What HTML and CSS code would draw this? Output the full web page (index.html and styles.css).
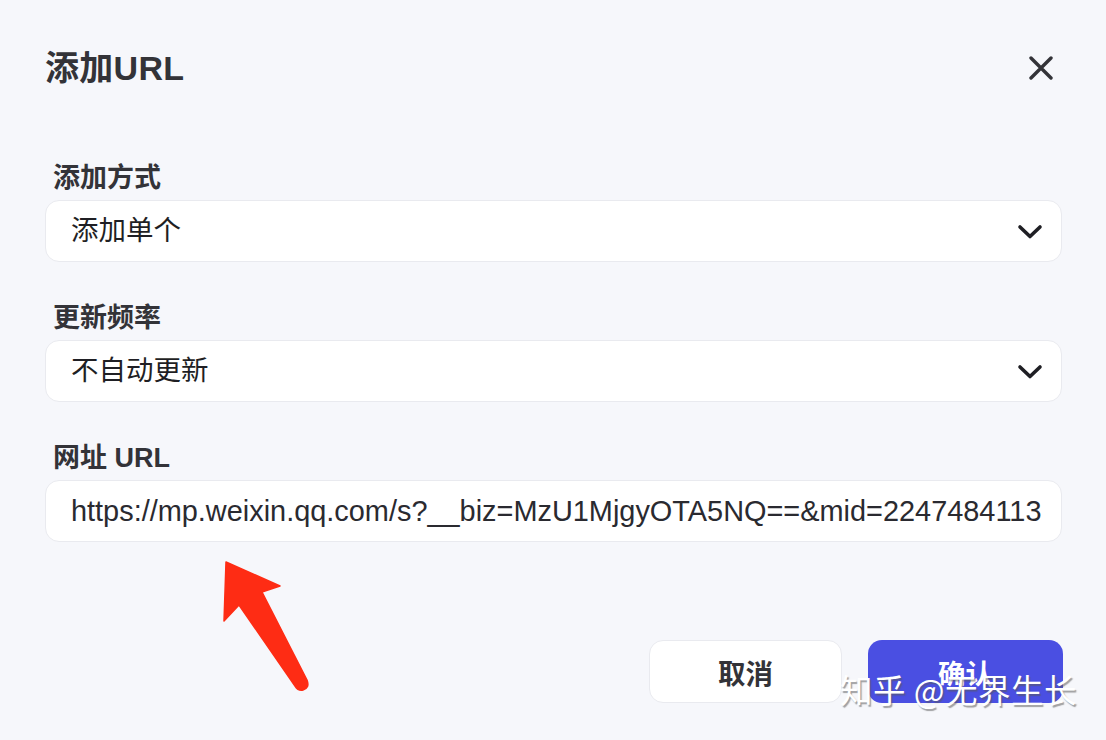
FILE: index.html
```html
<!DOCTYPE html>
<html lang="zh">
<head>
<meta charset="utf-8">
<link rel="stylesheet" href="styles.css">
</head>
<body>
<div class="dialog">
  <div class="header">
    <div class="title">添加URL</div>
    <svg class="close" width="24" height="24" viewBox="0 0 24 24"><path d="M2 2 L22 22 M22 2 L2 22" stroke="#333338" stroke-width="3.4" stroke-linecap="round" fill="none"/></svg>
  </div>
  <div class="form">
    <div class="field">
      <div class="label">添加方式</div>
      <div class="control"><span class="value">添加单个</span><svg class="chev" width="26" height="16" viewBox="0 0 26 16"><path d="M3 3 L13 12.5 L23 3" stroke="#1f1f24" stroke-width="3.6" stroke-linecap="round" stroke-linejoin="round" fill="none"/></svg></div>
    </div>
    <div class="field">
      <div class="label">更新频率</div>
      <div class="control"><span class="value">不自动更新</span><svg class="chev" width="26" height="16" viewBox="0 0 26 16"><path d="M3 3 L13 12.5 L23 3" stroke="#1f1f24" stroke-width="3.6" stroke-linecap="round" stroke-linejoin="round" fill="none"/></svg></div>
    </div>
    <div class="field">
      <div class="label">网址 URL</div>
      <div class="control"><span class="value url">https://mp.weixin.qq.com/s?__biz=MzU1MjgyOTA5NQ==&amp;mid=2247484113</span></div>
    </div>
  </div>
  <div class="actions">
    <div class="btn cancel">取消</div>
    <div class="btn confirm">确认</div>
  </div>
</div>
<svg class="arrow" width="120" height="160" viewBox="200 540 120 160"><path d="M226 562 L280 586 L262 592 L307 680 Q310 688 303 690 Q298 691 295 686 L239 605 L224 621 Z" fill="#fe2c14" stroke="#fe2c14" stroke-width="1.5" stroke-linejoin="round"/></svg>
<div class="watermark">知乎 @无界生长</div>
</body>
</html>
```
FILE: styles.css
```css
html, body {
  margin: 0;
  padding: 0;
  background: #f6f7fb;
}
body {
  width: 1106px;
  height: 740px;
  overflow: hidden;
  position: relative;
  font-family: "Liberation Sans", "Noto Sans CJK SC", sans-serif;
  color: #333338;
}
.dialog {
  padding: 44px 43px 0 45px;
}
.header {
  display: flex;
  justify-content: space-between;
  align-items: center;
  height: 48px;
}
.title {
  font-size: 34px;
  font-weight: 700;
  line-height: 48px;
  color: #333338;
  letter-spacing: 0.3px;
}
.close {
  margin-right: 10px;
}
.form {
  margin-top: 68px;
  display: flex;
  flex-direction: column;
  gap: 38px;
}
.field {
  display: flex;
  flex-direction: column;
  gap: 4px;
}
.label {
  padding-left: 8px;
  font-size: 27px;
  font-weight: 700;
  line-height: 36px;
  color: #333338;
}
.control {
  box-sizing: border-box;
  height: 62px;
  margin-right: 1px;
  background: #fff;
  border: 1px solid #e9eaef;
  border-radius: 14px;
  display: flex;
  align-items: center;
  justify-content: space-between;
  padding: 0 18px 0 25px;
  overflow: hidden;
}
.value {
  font-size: 27.5px;
  color: #1f1f24;
  line-height: 36px;
  white-space: nowrap;
}
.url {
  font-size: 28.9px;
  color: #2a2a30;
}
.chev {
  margin-top: 2px;
  flex: none;
}
.actions {
  margin-top: 98px;
  display: flex;
  justify-content: flex-end;
  gap: 26px;
}
.btn {
  box-sizing: border-box;
  height: 63px;
  border-radius: 14px;
  display: flex;
  align-items: center;
  justify-content: center;
  font-size: 27.5px;
  font-weight: 700;
}
.cancel {
  width: 193px;
  background: #fff;
  border: 1px solid #e9eaef;
  color: #333338;
}
.confirm {
  width: 195px;
  background: #4a4fe2;
  color: #fff;
}
.arrow {
  position: absolute;
  left: 200px;
  top: 540px;
}
.watermark {
  position: absolute;
  left: 840px;
  top: 669px;
  font-family: "Noto Sans CJK SC", sans-serif;
  font-size: 32.5px;
  line-height: 40px;
  color: #fff;
  text-shadow: 1.5px 1.5px 1px rgba(90, 90, 90, 0.55);
  letter-spacing: 0.5px;
}
```
